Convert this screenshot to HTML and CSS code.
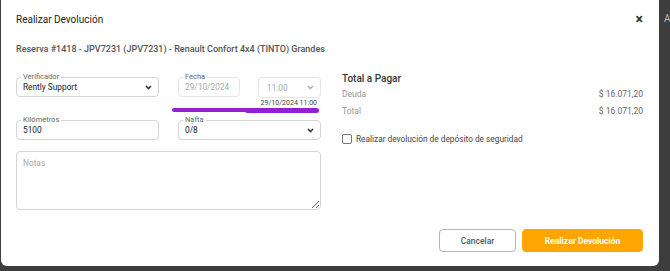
FILE: index.html
```html
<!DOCTYPE html>
<html lang="es">
<head>
    <meta charset="UTF-8">
    <meta name="viewport" content="width=device-width, initial-scale=1.0">
    <title>Realizar Devolución</title>
    <link rel="stylesheet" href="styles.css">
</head>
<body>
    <div class="backdrop-text">Ag</div>
    <div class="modal">
        <div class="modal-header">
            <h1 class="modal-title">Realizar Devolución</h1>
            <span class="close">&times;</span>
        </div>
        <div class="booking">Reserva #1418 - JPV7231 (JPV7231) - Renault Confort 4x4 (TINTO) Grandes</div>

        <div class="modal-body">
            <div class="form">
                <div class="form-row">
                    <div class="field">
                        <span class="field-label">Verificador</span>
                        <span class="field-value">Rently Support</span>
                        <svg class="chevron" width="7" height="5" viewBox="0 0 7 5"><path d="M1 1 L3.5 3.5 L6 1" fill="none" stroke="#333" stroke-width="1.6"/></svg>
                    </div>
                    <div class="date-group">
                        <div class="field field-date disabled">
                            <span class="field-label">Fecha</span>
                            <span class="field-value">29/10/2024</span>
                        </div>
                        <div class="time-col">
                            <div class="field field-time disabled">
                                <span class="field-value">11:00</span>
                                <svg class="chevron" width="7" height="5" viewBox="0 0 7 5"><path d="M1 1 L3.5 3.5 L6 1" fill="none" stroke="#aaa" stroke-width="1.3"/></svg>
                            </div>
                            <div class="date-hint">29/10/2024 11:00</div>
                        </div>
                    </div>
                </div>
                <div class="form-row">
                    <div class="field">
                        <span class="field-label">Kilómetros</span>
                        <span class="field-value">5100</span>
                    </div>
                    <div class="field">
                        <span class="field-label">Nafta</span>
                        <span class="field-value">0/8</span>
                        <svg class="chevron" width="7" height="5" viewBox="0 0 7 5"><path d="M1 1 L3.5 3.5 L6 1" fill="none" stroke="#333" stroke-width="1.6"/></svg>
                    </div>
                </div>
                <textarea class="notes" placeholder="Notas"></textarea>

                <!-- marker drawn over the date fields -->
                <div class="mark mark-left"></div>
                <div class="mark mark-right"></div>
            </div>

            <div class="summary">
                <h2 class="summary-title">Total a Pagar</h2>
                <div class="summary-line">
                    <span>Deuda</span>
                    <span class="amount">$ 16.071,20</span>
                </div>
                <div class="summary-line">
                    <span>Total</span>
                    <span class="amount">$ 16.071,20</span>
                </div>
                <label class="check">
                    <span class="check-box"></span>
                    Realizar devolución de depósito de seguridad
                </label>
            </div>
        </div>

        <div class="modal-footer">
            <button class="btn btn-cancel">Cancelar</button>
            <button class="btn btn-primary">Realizar Devolución</button>
        </div>
    </div>
</body>
</html>
```

FILE: styles.css
```css
body {
    margin: 0;
    height: 271px;
    overflow: hidden;
    background-color: #3d3d3d;
    font-family: Roboto, "Liberation Sans", sans-serif;
    position: relative;
}
.backdrop-text {
    position: absolute;
    left: 664px;
    top: 13px;
    font-size: 10px;
    color: #bbb;
}
.modal {
    margin-left: 1px;
    width: 658px;
    height: 266px;
    background-color: white;
    border-radius: 0 0 6px 6px;
    box-sizing: border-box;
    padding: 0 16px 0 15px;
    display: flex;
    flex-direction: column;
}
.modal-header {
    display: flex;
    justify-content: space-between;
    align-items: center;
    height: 38px;
}
.modal-title {
    margin: 0;
    font-size: 10px;
    font-weight: 400;
    color: #222;
}
.close {
    font-size: 14px;
    font-weight: 700;
    color: #333;
}
.booking {
    margin-top: 6px;
    font-size: 9px;
    font-weight: 500;
    color: #555;
}
.modal-body {
    display: flex;
    gap: 21px;
    margin-top: 18px;
}
.form {
    width: 305px;
    position: relative;
    display: flex;
    flex-direction: column;
    padding-top: 5px;
}
.form-row {
    display: flex;
    justify-content: space-between;
    margin-bottom: 13px;
}
.form-row + .form-row {
    margin-bottom: 11px;
}
.field {
    position: relative;
    width: 143px;
    height: 20px;
    box-sizing: border-box;
    border: 1px solid #d4d4d4;
    border-radius: 4px;
    display: flex;
    align-items: center;
    padding: 0 6px;
    font-size: 8.3px;
    color: #222;
}
.field-label {
    position: absolute;
    left: 4px;
    top: -6px;
    padding: 0 2px;
    background: white;
    font-size: 7.5px;
    color: #666;
}
.chevron {
    margin-left: auto;
}
.date-group {
    display: flex;
    gap: 18px;
}
.field.disabled {
    border-color: #e6e6e6;
    color: #aaa;
}
.field-date {
    width: 62px;
}
.field-time {
    width: 63px;
    height: 21px;
    padding-left: 8px;
}
.time-col {
    display: flex;
    flex-direction: column;
}
.date-hint {
    margin-top: 1px;
    padding-right: 4px;
    font-size: 7px;
    color: #444;
    text-align: right;
}
.notes {
    width: 305px;
    height: 59px;
    box-sizing: border-box;
    border: 1px solid #d4d4d4;
    border-radius: 4px;
    padding: 6px 6px;
    font-family: inherit;
    font-size: 8.3px;
    resize: vertical;
}
.notes::placeholder {
    color: #aaa;
}
.mark {
    position: absolute;
    background-color: #9420d6;
    border-radius: 3px;
}
.mark-left {
    left: 156px;
    top: 36px;
    width: 76px;
    height: 4px;
}
.mark-right {
    left: 229px;
    top: 36px;
    width: 74px;
    height: 5px;
}
.summary {
    flex: 1;
    padding-top: 1px;
}
.summary-title {
    margin: 0 0 1px;
    font-size: 10px;
    font-weight: 500;
    color: #333;
}
.summary-line {
    display: flex;
    justify-content: space-between;
    font-size: 8.5px;
    color: #999;
    height: 17px;
    align-items: center;
}
.amount {
    color: #666;
}
.check {
    display: flex;
    align-items: center;
    gap: 4px;
    margin-top: 15px;
    font-size: 8.3px;
    color: #444;
}
.check-box {
    width: 8px;
    height: 8px;
    border: 1px solid #777;
    border-radius: 2px;
}
.modal-footer {
    margin-top: auto;
    margin-bottom: 14px;
    display: flex;
    justify-content: flex-end;
    gap: 6px;
}
.btn {
    height: 23px;
    border-radius: 4px;
    font-family: inherit;
    font-size: 8.5px;
    font-weight: 500;
}
.btn-cancel {
    width: 77px;
    background: white;
    border: 1px solid #b5b5b5;
    color: #555;
}
.btn-primary {
    width: 121px;
    background-color: #ffa500;
    border: 1px solid #ffa500;
    color: white;
    font-weight: 700;
}
```
